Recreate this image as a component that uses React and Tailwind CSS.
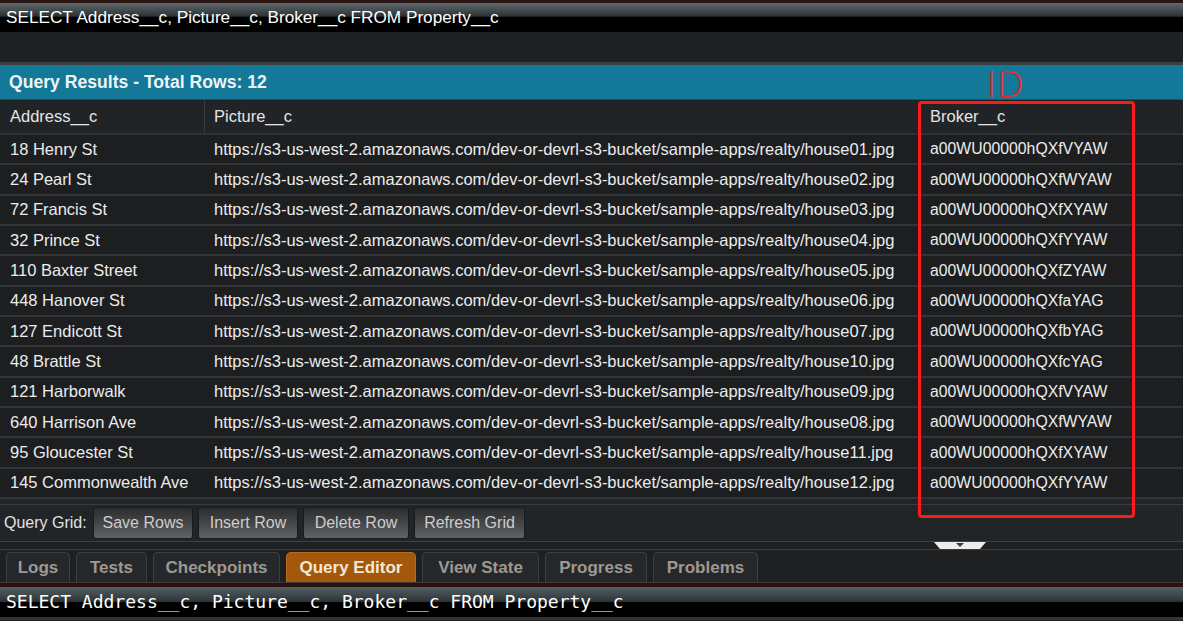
import React from "react";

const rows = [
  ["18 Henry St", "house01", "a00WU00000hQXfVYAW"],
  ["24 Pearl St", "house02", "a00WU00000hQXfWYAW"],
  ["72 Francis St", "house03", "a00WU00000hQXfXYAW"],
  ["32 Prince St", "house04", "a00WU00000hQXfYYAW"],
  ["110 Baxter Street", "house05", "a00WU00000hQXfZYAW"],
  ["448 Hanover St", "house06", "a00WU00000hQXfaYAG"],
  ["127 Endicott St", "house07", "a00WU00000hQXfbYAG"],
  ["48 Brattle St", "house10", "a00WU00000hQXfcYAG"],
  ["121 Harborwalk", "house09", "a00WU00000hQXfVYAW"],
  ["640 Harrison Ave", "house08", "a00WU00000hQXfWYAW"],
  ["95 Gloucester St", "house11", "a00WU00000hQXfXYAW"],
  ["145 Commonwealth Ave", "house12", "a00WU00000hQXfYYAW"],
];

const base = "https://s3-us-west-2.amazonaws.com/dev-or-devrl-s3-bucket/sample-apps/realty/";

// widths measured off the screenshot
const tabs = [
  { label: "Logs", w: "w-[64px]" },
  { label: "Tests", w: "w-[71px]" },
  { label: "Checkpoints", w: "w-[127px]" },
  { label: "Query Editor", w: "w-[130px]", active: true },
  { label: "View State", w: "w-[117px]" },
  { label: "Progress", w: "w-[102px]" },
  { label: "Problems", w: "w-[105px]" },
];

const buttons = [
  { label: "Save Rows", w: "w-[100px]" },
  { label: "Insert Row", w: "w-[100px]" },
  { label: "Delete Row", w: "w-[106px]" },
  { label: "Refresh Grid", w: "w-[111px]" },
];

export default function App() {
  return (
    <div className="relative w-[1183px] h-[621px] overflow-hidden bg-[#1e2022] font-['Liberation_Sans',sans-serif] text-[#e6e6e6]">
      {/* top query bar */}
      <div className="h-[3px] bg-[#2b1414]" />
      <div className="h-[29px] bg-[linear-gradient(to_bottom,#5f696b_0%,#2b3335_45%,#000_50%,#000_100%)] px-[6px] flex items-center text-[17.2px] text-white">
        SELECT Address__c, Picture__c, Broker__c FROM Property__c
      </div>
      <div className="h-[30px] bg-[#1e2022]" />
      <div className="h-[3px] bg-[#3b3e40]" />

      {/* results header */}
      <div className="h-[35px] bg-[#147899] border-b border-[#2b4a55] flex items-center px-[9px] text-[17.6px] font-bold text-[#eef4f6]">
        Query Results - Total Rows: 12
      </div>

      {/* grid */}
      <div className="h-[35px] bg-[#212426] border-b-2 border-[#2f3234] flex items-center text-[16.5px] text-[#e4e4e4]">
        <div className="w-[205px] h-full flex items-center pl-[10px] border-r border-[#3a3d40]">Address__c</div>
        <div className="w-[715px] h-full flex items-center pl-[9px]">Picture__c</div>
        <div className="flex-1 h-full flex items-center pl-[10px]">Broker__c</div>
      </div>
      {rows.map((r) => (
        <div
          key={r[1]}
          className="h-[30.33px] bg-[#1c1e20] border-b-2 border-[#323537] flex items-center text-[16.5px] text-[#ececec]"
        >
          <div className="w-[205px] pl-[10px] whitespace-nowrap">{r[0]}</div>
          <div className="w-[715px] pl-[9px] whitespace-nowrap">{base + r[1] + ".jpg"}</div>
          <div className="flex-1 pl-[10px] whitespace-nowrap text-[15.8px]">{r[2]}</div>
        </div>
      ))}
      <div className="h-[6px] bg-[#222527] border-b border-[#3a3d40]" />

      {/* toolbar */}
      <div className="h-[37px] bg-[#222527] border-b border-[#3e4143] flex items-center pl-[4px] text-[16px]">
        <span className="text-[#e2e2e2] w-[89px]">Query Grid:</span>
        <div className="flex gap-[5px]">
          {buttons.map((b) => (
            <div
              key={b.label}
              className={`${b.w} h-[32px] flex items-center justify-center rounded-[3px] border border-[#1a1b1c] bg-[linear-gradient(to_bottom,#2c2d2e,#4a4b4c_60%,#626364)] text-[#cdcdcd]`}
            >
              {b.label}
            </div>
          ))}
        </div>
      </div>

      {/* strip with collapse handle */}
      <div className="relative h-[8px] bg-[#1e2022] border-b border-[#3a3d40]">
        <svg className="absolute left-[934px] top-0" width="52" height="7" viewBox="0 0 52 7">
          <polygon points="0,0 52,0 46,7 6,7" fill="#ececec" />
          <polygon points="22,1 30,1 26,5" fill="#3a3a3a" />
        </svg>
      </div>

      {/* tabs */}
      <div className="h-[32px] bg-[#1e2022] flex items-end pl-[6px] gap-[6px]">
        {tabs.map((t) => (
          <div
            key={t.label}
            className={
              t.active
                ? `${t.w} h-[30px] flex items-center justify-center rounded-t-[5px] bg-[#a4580b] border border-[#b86a1e] border-b-0 text-[17px] font-bold text-[#f3e7da]`
                : `${t.w} h-[30px] flex items-center justify-center rounded-t-[5px] bg-[#25282a] border border-[#3c4043] border-b-0 text-[17px] font-bold text-[#9e9892]`
            }
          >
            {t.label}
          </div>
        ))}
      </div>
      <div className="h-px bg-[#3e3a3a]" />
      <div className="h-[4px] bg-[#2c1010]" />

      {/* bottom query bar */}
      <div className="h-[30px] bg-[linear-gradient(to_bottom,#556062_0%,#2c3436_48%,#000_52%,#000_100%)] px-[6px] flex items-center font-['DejaVu_Sans_Mono',monospace] text-[18px] text-white">
        SELECT Address__c, Picture__c, Broker__c FROM Property__c
      </div>
      <div className="h-[3px] bg-[#333637]" />

      {/* annotation */}
      <div className="absolute left-[918px] top-[101px] w-[217px] h-[417px] border-[3px] border-[#ff1a1a] rounded-[4px] pointer-events-none" />
      <div className="absolute left-[986px] top-[67px] text-[36px] leading-none text-[#ff2020] font-['DejaVu_Sans',sans-serif] font-extralight">
        ID
      </div>
    </div>
  );
}
